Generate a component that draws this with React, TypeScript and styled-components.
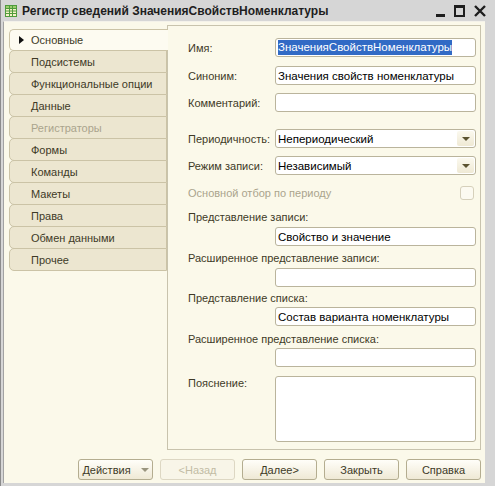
import React from "react";
import styled, { createGlobalStyle } from "styled-components";

const GlobalStyle = createGlobalStyle`
  html, body {
    margin: 0;
    padding: 0;
  }
  body {
    font-family: "Liberation Sans", Arial, sans-serif;
    font-size: 11px;
    background: #d6d6d6;
  }
`;

const Window = styled.div`
  width: 495px;
  height: 486px;
  box-sizing: border-box;
  background: #d6d6d6;
  border-left: 1px solid #8c8c8c;
  display: flex;
  flex-direction: column;
  overflow: hidden;
`;

const TitleBar = styled.div`
  height: 21px;
  flex-shrink: 0;
  display: flex;
  align-items: center;
  padding-left: 4px;
  padding-right: 9px;
`;

const TitleText = styled.span`
  margin-left: 5px;
  font-weight: bold;
  font-size: 12px;
  color: #1e1e1e;
  white-space: nowrap;
`;

const Controls = styled.div`
  margin-left: auto;
  display: flex;
  align-items: center;
  gap: 9px;
`;

const Client = styled.div`
  flex: 1;
  margin: 0 10px 3px 2px;
  box-sizing: border-box;
  background: #fbf9ea;
  border-top: 1px solid #f4f2ea;
  border-left: 1px solid #a2a2a2;
  display: flex;
  flex-direction: column;
  padding: 0 4px 0 5px;
`;

const Main = styled.div`
  flex: 1;
  display: flex;
  padding-top: 3px;
  min-height: 0;
`;

const TabList = styled.div`
  width: 158px;
  flex-shrink: 0;
  padding-top: 4px;
  display: flex;
  flex-direction: column;
  position: relative;
  z-index: 1;
`;

const Tab = styled.div<{ $active?: boolean; $disabled?: boolean }>`
  box-sizing: border-box;
  height: 23px;
  width: ${({ $active }) => ($active ? "159px" : "158px")};
  margin-top: -1px;
  display: flex;
  align-items: center;
  padding-left: ${({ $active }) => ($active ? "9px" : "21px")};
  border: 1px solid #cbc3a6;
  border-right: ${({ $active }) => ($active ? "none" : "1px solid #cbc3a6")};
  border-radius: 5px 0 0 5px;
  background: ${({ $active }) => ($active ? "#fdfbf1" : "#ece6d0")};
  color: ${({ $disabled }) => ($disabled ? "#aaa48d" : "#3e3a27")};
  white-space: nowrap;

  &:first-child {
    margin-top: 0;
    height: 22px;
  }
`;

const Arrow = styled.span`
  width: 0;
  height: 0;
  border-top: 4px solid transparent;
  border-bottom: 4px solid transparent;
  border-left: 5px solid #111;
  margin-right: 7px;
`;

const Pane = styled.div`
  flex: 1;
  box-sizing: border-box;
  border: 1px solid #c8c3ad;
  padding: 12px 4px 0 20px;
  display: flex;
  flex-direction: column;
`;

const FieldRow = styled.div<{ $mt: number }>`
  display: flex;
  align-items: center;
  height: 19px;
  margin-top: ${({ $mt }) => $mt}px;
`;

const Label = styled.span<{ $disabled?: boolean }>`
  width: 87px;
  flex-shrink: 0;
  color: ${({ $disabled }) => ($disabled ? "#aaa48d" : "#3e3a27")};
  white-space: nowrap;
`;

const Caption = styled.div<{ $mt: number }>`
  line-height: 15px;
  height: 15px;
  margin-top: ${({ $mt }) => $mt}px;
  color: #3e3a27;
  white-space: nowrap;
`;

const Input = styled.div<{ $mt?: number; $indent?: boolean; $height?: number }>`
  box-sizing: border-box;
  width: 201px;
  height: ${({ $height }) => $height ?? 19}px;
  margin-top: ${({ $mt }) => $mt ?? 0}px;
  margin-left: ${({ $indent }) => ($indent ? "87px" : "0")};
  background: #ffffff;
  border: 1px solid #bab49c;
  border-radius: 3px;
  display: flex;
  align-items: center;
  padding-left: 2px;
  font-size: 11.5px;
  color: #000;
  white-space: nowrap;
  flex-shrink: 0;
`;

const Selected = styled.span`
  background: #316ac5;
  color: #fff;
  line-height: 15px;
`;

const ComboText = styled.span`
  flex: 1;
`;

const ComboButton = styled.span`
  width: 17px;
  height: 15px;
  margin-right: 1px;
  border-radius: 2px;
  background: linear-gradient(#fbf9ef, #efe9d4);
  display: flex;
  align-items: center;
  justify-content: center;

  &::after {
    content: "";
    border-left: 4px solid transparent;
    border-right: 4px solid transparent;
    border-top: 4px solid #5b5331;
  }
`;

const CheckBox = styled.span`
  margin-left: auto;
  margin-right: 2px;
  width: 12px;
  height: 12px;
  border: 1px solid #d6d0bb;
  border-radius: 3px;
  background: #fcfaf1;
`;

const MemoRow = styled.div`
  display: flex;
  align-items: flex-start;
  margin-top: 9px;
`;

const MemoLabel = styled(Label)`
  line-height: 15px;
`;

const Footer = styled.div`
  height: 33px;
  flex-shrink: 0;
  box-sizing: border-box;
  padding: 9px 0 3px;
  display: flex;
  justify-content: flex-end;
  gap: 7px;
`;

const Button = styled.div<{ $disabled?: boolean }>`
  box-sizing: border-box;
  width: 75px;
  height: 21px;
  border: 1px solid ${({ $disabled }) => ($disabled ? "#ddd7c3" : "#b4ad90")};
  border-radius: 3px;
  background: ${({ $disabled }) =>
    $disabled ? "#f8f5e8" : "linear-gradient(#fffef9, #efe9d5)"};
  color: ${({ $disabled }) => ($disabled ? "#c2bca5" : "#3e3a27")};
  display: flex;
  align-items: center;
  justify-content: center;
  gap: 10px;
`;

const ButtonArrow = styled.span`
  border-left: 4px solid transparent;
  border-right: 4px solid transparent;
  border-top: 4px solid #9a957f;
  margin-top: 1px;
`;

const TableIcon = () => (
  <svg width="12" height="12" viewBox="0 0 12 12">
    <rect x="0.5" y="0.5" width="11" height="11" fill="#f4f1c6" stroke="#4e9b3c" />
    <rect x="1" y="1" width="10" height="2.5" fill="#9ccc6f" />
    <path d="M4.5 1v10M7.5 1v10M1 3.5h10M1 6h10M1 8.5h10" stroke="#4e9b3c" strokeWidth="1" />
  </svg>
);

const MinimizeIcon = () => (
  <svg width="9" height="12" viewBox="0 0 9 12">
    <rect x="0" y="9" width="9" height="3" fill="#1e1e1e" />
  </svg>
);

const MaximizeIcon = () => (
  <svg width="11" height="12" viewBox="0 0 11 12">
    <rect x="0" y="0" width="11" height="12" fill="#1e1e1e" />
    <rect x="2" y="3" width="7" height="7" fill="#d6d6d6" />
  </svg>
);

const CloseIcon = () => (
  <svg width="12" height="12" viewBox="0 0 12 12">
    <path d="M1 1L11 11M11 1L1 11" stroke="#1e1e1e" strokeWidth="2.4" />
  </svg>
);

const tabs = [
  "Основные",
  "Подсистемы",
  "Функциональные опции",
  "Данные",
  "Регистраторы",
  "Формы",
  "Команды",
  "Макеты",
  "Права",
  "Обмен данными",
  "Прочее",
];

const App: React.FC = () => {
  return (
    <>
      <GlobalStyle />
      <Window>
        <TitleBar>
          <TableIcon />
          <TitleText>Регистр сведений ЗначенияСвойствНоменклатуры</TitleText>
          <Controls>
            <MinimizeIcon />
            <MaximizeIcon />
            <CloseIcon />
          </Controls>
        </TitleBar>
        <Client>
          <Main>
            <TabList>
              {tabs.map((name, i) => (
                <Tab key={name} $active={i === 0} $disabled={name === "Регистраторы"}>
                  {i === 0 && <Arrow />}
                  {name}
                </Tab>
              ))}
            </TabList>
            <Pane>
              <FieldRow $mt={0}>
                <Label>Имя:</Label>
                <Input>
                  <Selected>ЗначенияСвойствНоменклатуры</Selected>
                </Input>
              </FieldRow>
              <FieldRow $mt={9}>
                <Label>Синоним:</Label>
                <Input>Значения свойств номенклатуры</Input>
              </FieldRow>
              <FieldRow $mt={8}>
                <Label>Комментарий:</Label>
                <Input />
              </FieldRow>
              <FieldRow $mt={17}>
                <Label>Периодичность:</Label>
                <Input>
                  <ComboText>Непериодический</ComboText>
                  <ComboButton />
                </Input>
              </FieldRow>
              <FieldRow $mt={8}>
                <Label>Режим записи:</Label>
                <Input>
                  <ComboText>Независимый</ComboText>
                  <ComboButton />
                </Input>
              </FieldRow>
              <FieldRow $mt={8}>
                <Label $disabled>Основной отбор по периоду</Label>
                <CheckBox />
              </FieldRow>
              <Caption $mt={8}>Представление записи:</Caption>
              <Input $mt={2} $indent>
                Свойство и значение
              </Input>
              <Caption $mt={5}>Расширенное представление записи:</Caption>
              <Input $mt={2} $indent />
              <Caption $mt={4}>Представление списка:</Caption>
              <Input $mt={1} $indent>
                Состав варианта номенклатуры
              </Input>
              <Caption $mt={6}>Расширенное представление списка:</Caption>
              <Input $mt={1} $indent />
              <MemoRow>
                <MemoLabel>Пояснение:</MemoLabel>
                <Input $height={66} />
              </MemoRow>
            </Pane>
          </Main>
          <Footer>
            <Button>
              Действия
              <ButtonArrow />
            </Button>
            <Button $disabled>&lt;Назад</Button>
            <Button>Далее&gt;</Button>
            <Button>Закрыть</Button>
            <Button>Справка</Button>
          </Footer>
        </Client>
      </Window>
    </>
  );
};

export default App;
